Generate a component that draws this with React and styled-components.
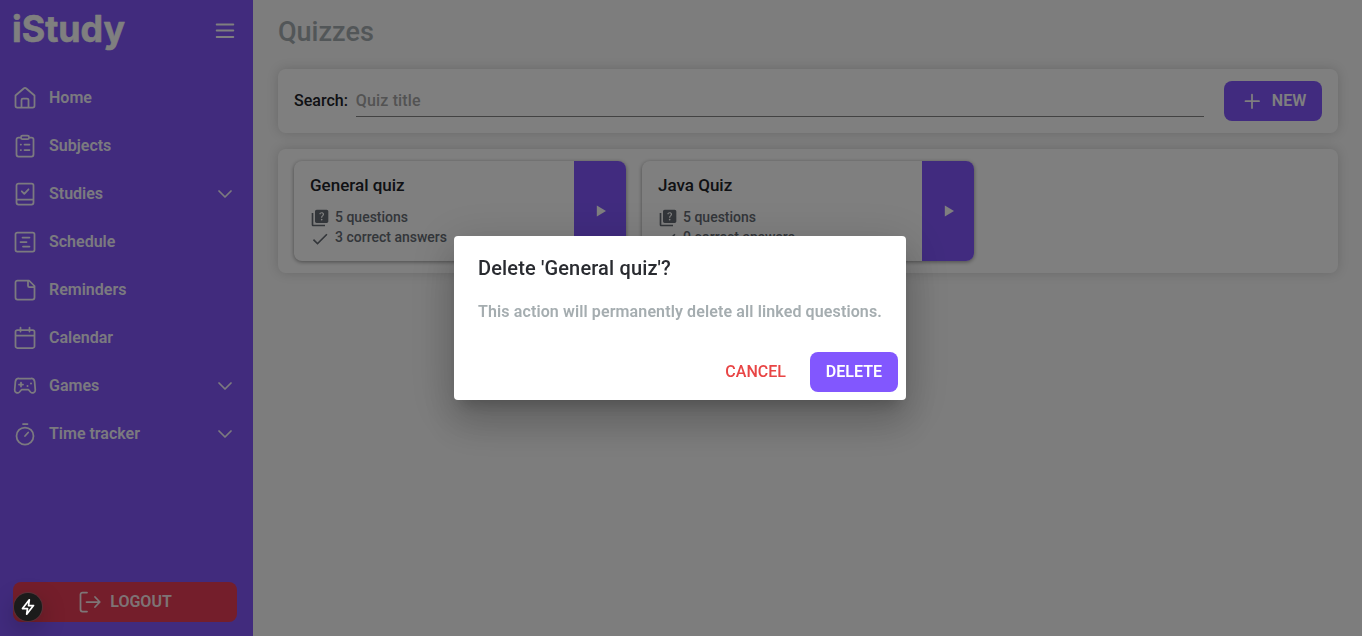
import React from "react";
import styled, { createGlobalStyle, css } from "styled-components";

const GlobalStyle = createGlobalStyle`
  *, *::before, *::after { box-sizing: border-box; }
  body {
    margin: 0;
    background: #fafafa;
    color: #212328;
    font-family: Roboto, "Liberation Sans", sans-serif;
    font-size: 16px;
    font-weight: 500;
    overflow: hidden;
  }
  button, input { font: inherit; }
`;

const Shell = styled.div`
  display: flex;
  height: 100vh;
`;

const Sidebar = styled.aside`
  display: flex;
  flex-direction: column;
  width: 253px;
  flex: none;
  padding: 0 16px 14px 13px;
  background: #8257fb;
  color: #fff;
`;

const Brand = styled.header`
  display: flex;
  align-items: center;
  justify-content: space-between;
  height: 62px;
  margin-bottom: 12px;
`;

const Logo = styled.svg`
  display: block;
  width: 120px;
  height: 62px;
  overflow: visible;
  fill: #fff;
  stroke: #fff;
  stroke-width: 0.6;
  stroke-linejoin: round;
  font-family: Inter, sans-serif;
  font-size: 37px;
  font-weight: 700;
`;

const IconButton = styled.button`
  display: flex;
  padding: 0;
  border: 0;
  background: none;
  color: inherit;
`;

const Svg = styled.svg`
  display: block;
  flex: none;
  fill: none;
  stroke: currentColor;
  stroke-width: 1.75;
  stroke-linecap: round;
  stroke-linejoin: round;
`;

const Nav = styled.nav`
  display: flex;
  flex-direction: column;
  flex: 1;
`;

const NavItem = styled.a`
  display: flex;
  align-items: center;
  gap: 12px;
  height: 48px;
  color: rgba(255, 255, 255, 0.94);
  font-weight: 600;
`;

const NavLabel = styled.span`
  flex: 1;
  padding-bottom: 2px;
`;

const Button = styled.button`
  display: flex;
  align-items: center;
  justify-content: center;
  height: 40px;
  padding: 0 16px;
  border: 0;
  border-radius: 8px;
  color: #fff;
  font-weight: 600;
  ${({ $tone }) =>
    ({
      primary: css`background: #8257fe;`,
      danger: css`background: #e83d57; gap: 8px; color: rgba(255, 255, 255, 0.9);`,
      text: css`background: none; color: #e84545; font-weight: 500;`,
    })[$tone]}
`;

const ButtonLabel = styled.span`
  padding-bottom: 2px;
`;

const Main = styled.main`
  flex: 1;
  display: flex;
  flex-direction: column;
  gap: 16px;
  padding: 11px 24px 0 25px;
`;

const PageTitle = styled.h1`
  margin: 0;
  height: 42px;
  line-height: 42px;
  font-size: 27px;
  font-weight: 500;
  color: #a5adb0;
`;

const Panel = styled.section`
  display: flex;
  align-items: ${({ $align }) => $align || "flex-start"};
  padding: 12px 16px;
  border-radius: 8px;
  background: #fff;
  box-shadow: 0 0 12px rgba(0, 0, 0, 0.16);
`;

const SearchLabel = styled.label`
  margin-right: 8px;
  padding-bottom: 2px;
`;

const SearchInput = styled.input`
  flex: 1;
  height: 32px;
  margin-right: 20px;
  padding: 0;
  border: 0;
  border-bottom: 1px solid #858585;
  outline: 0;
  background: none;
  letter-spacing: 0.15px;
  &::placeholder { color: #a6a6a6; opacity: 1; }
`;

const NewButton = styled(Button)`
  width: 98px;
  gap: 8px;
  padding: 0 16px;
`;

const Cards = styled.div`
  display: flex;
  gap: 16px;
`;

const Card = styled.article`
  display: flex;
  width: 332px;
  height: 100px;
  border-radius: 8px;
  overflow: hidden;
  background: #fff;
  box-shadow: 0 1px 4px rgba(0, 0, 0, 0.42);
`;

const CardBody = styled.div`
  flex: 1;
  padding: 12px 16px;
`;

const CardTitle = styled.h2`
  margin: 0 0 10px;
  font-size: 17px;
  line-height: 24px;
  font-weight: 500;
`;

const Stat = styled.div`
  display: flex;
  align-items: center;
  gap: 5px;
  height: 20px;
  font-size: 14px;
  color: #666c74;
`;

const StatIcon = styled.svg`
  flex: none;
  margin-top: ${({ $drop }) => $drop}px;
  fill: currentColor;
`;

const PlayButton = styled.button`
  display: flex;
  align-items: center;
  justify-content: center;
  width: 52px;
  padding: 0 0 0 1px;
  border: 0;
  background: #8257fe;
  color: #fff;
`;

const Overlay = styled.div`
  position: fixed;
  inset: 0;
  display: flex;
  align-items: center;
  justify-content: center;
  padding-right: 2px;
  background: rgba(0, 0, 0, 0.5);
`;

const Dialog = styled.div`
  width: 452px;
  border-radius: 4px;
  background: #fff;
  box-shadow: 0 11px 15px -7px rgba(0, 0, 0, 0.2), 0 24px 38px 3px rgba(0, 0, 0, 0.14), 0 9px 46px 8px rgba(0, 0, 0, 0.12);
`;

const DialogTitle = styled.h2`
  margin: 0;
  padding: 16px 24px;
  font-size: 20px;
  line-height: 32px;
  font-weight: 500;
  letter-spacing: 0.15px;
  color: #292b30;
`;

const DialogText = styled.p`
  margin: 0;
  padding: 0 24px 20px;
  line-height: 24px;
  font-weight: 600;
  letter-spacing: 0.12px;
  white-space: nowrap;
  color: #a5adb0;
`;

const DialogActions = styled.div`
  display: flex;
  justify-content: flex-end;
  gap: 8px;
  padding: 8px;
`;

const DevBadge = styled.div`
  position: fixed;
  left: 14px;
  bottom: 15px;
  display: flex;
  align-items: center;
  justify-content: center;
  width: 28px;
  height: 28px;
  border-radius: 50%;
  background: #1b1b1b;
  color: #fff;
  box-shadow: 0 0 0 1px rgba(70, 70, 70, 0.5), 0 8px 24px rgba(0, 0, 0, 0.25);
`;

const icons = {
  home: <path d="M2.5 9.500 10.700 2.500a2 2 0 0 1 2.600 0L21.500 9.500V19.800a1.800 1.800 0 0 1-1.800 1.800H4.300a1.800 1.800 0 0 1-1.800-1.800ZM8.500 21.500V14a1.500 1.500 0 0 1 1.500-1.500h4a1.500 1.500 0 0 1 1.500 1.500v7.500" />,
  subjects: <path d="M8 3.500H5.500a2 2 0 0 0-2 2v15a2 2 0 0 0 2 2h13a2 2 0 0 0 2-2v-15a2 2 0 0 0-2-2H16M9.500 1.500h5A1.500 1.500 0 0 1 16 3v.7a1.500 1.500 0 0 1-1.500 1.500h-5A1.500 1.500 0 0 1 8 3.700V3a1.500 1.500 0 0 1 1.500-1.500ZM7.700 10.500h.3M11.500 10.500h5M7.700 16h.3M11.500 16h5" />,
  studies: <path d="M5.500 1.500h13a2 2 0 0 1 2 2v17a2 2 0 0 1-2 2h-13a2 2 0 0 1-2-2v-17a2 2 0 0 1 2-2ZM3.500 17.500h17M8.800 9.300l2.500 2.500 4.200-4.500" />,
  schedule: <path d="M4.300 2.500h15.400a1.800 1.800 0 0 1 1.800 1.800v15.400a1.800 1.800 0 0 1-1.800 1.800H4.300a1.800 1.800 0 0 1-1.800-1.800V4.300a1.800 1.800 0 0 1 1.800-1.800ZM9.500 7.500h7M7.500 12h6M10 16.500h6.500" />,
  reminders: <path d="M4.500 2.500H16l5.500 5.500v11.500a2 2 0 0 1-2 2h-15a2 2 0 0 1-2-2v-15a2 2 0 0 1 2-2ZM15 2.500v5.200a1.300 1.300 0 0 0 1.300 1.300h5.200" />,
  calendar: <path d="M4.300 4h15.400a1.800 1.800 0 0 1 1.800 1.800v14.400a1.800 1.800 0 0 1-1.800 1.800H4.300a1.800 1.800 0 0 1-1.800-1.800V5.800A1.800 1.800 0 0 1 4.300 4ZM2.500 9.500h19M7.500 1.500v4M16.500 1.500v4" />,
  games: (
    <>
      <path d="M6 4.500h12a3.600 3.600 0 0 1 3.600 3.200l.7 8.100a2.800 2.800 0 0 1-4.800 2.200l-2-2.300H8.500l-2 2.300a2.800 2.800 0 0 1-4.800-2.200l.7-8.100A3.600 3.600 0 0 1 6 4.500ZM6 10.500h4M8 8.500v4" />
      <path d="M14.500 12h.01M18 9.500h.01" strokeWidth="2" />
    </>
  ),
  timer: <path d="M12 5.500a8.500 8.500 0 1 0 0 17 8.500 8.500 0 0 0 0-17ZM10 2h4.500M12 14l3.200-3.500" />,
  logout: <path d="M9 2.500H4.500a2 2 0 0 0-2 2v15a2 2 0 0 0 2 2H9M8.500 12h13M17 7l4.800 5-4.800 5" />,
  chevron: <path d="m6 9 6 6 6-6" />,
  menu: <path d="M3.700 5.500h16.600M3.700 11.500h16.600M3.700 18h16.600" strokeWidth="1.900" />,
};

const Icon = ({ name, size = 24 }) => (
  <Svg width={size} height={size} viewBox="0 0 24 24" aria-hidden="true">
    {icons[name]}
  </Svg>
);

const navItems = [
  { icon: "home", label: "Home" },
  { icon: "subjects", label: "Subjects" },
  { icon: "studies", label: "Studies", expandable: true },
  { icon: "schedule", label: "Schedule" },
  { icon: "reminders", label: "Reminders" },
  { icon: "calendar", label: "Calendar" },
  { icon: "games", label: "Games", expandable: true },
  { icon: "timer", label: "Time tracker", expandable: true },
];

const quizzes = [
  { title: "General quiz", questions: 5, correct: 3 },
  { title: "Java Quiz", questions: 5, correct: 0 },
];

const QuizCard = ({ quiz }) => (
  <Card>
    <CardBody>
      <CardTitle>{quiz.title}</CardTitle>
      <Stat>
        <StatIcon $drop={1} width="20" height="20" viewBox="0 0 24 24">
          <path d="M4 6H2v14c0 1.100.9 2 2 2h14v-2H4V6zm16-4H8c-1.100 0-2 .9-2 2v12c0 1.100.9 2 2 2h12c1.100 0 2-.9 2-2V4c0-1.100-.9-2-2-2zm-5.990 13c-.59 0-1.050-.47-1.050-1.050 0-.59.470-1.040 1.050-1.040.590 0 1.040.450 1.040 1.040-.01.580-.450 1.050-1.040 1.050zm2.500-6.170c-.630.930-1.230 1.210-1.560 1.810-.130.240-.180.400-.180 1.180h-1.520c0-.410-.060-1.080.260-1.650.410-.730 1.180-1.160 1.630-1.800.480-.680.210-1.940-1.140-1.940-.880 0-1.320.670-1.500 1.230l-1.370-.570C11.510 5.960 12.520 5 13.990 5c1.230 0 2.080.560 2.510 1.260.370.610.580 1.730.010 2.570z" />
        </StatIcon>
        {quiz.questions} questions
      </Stat>
      <Stat>
        <StatIcon $drop={3} width="20" height="20" viewBox="0 0 24 24">
          <path d="M9 16.170 4.830 12l-1.420 1.410L9 19 21 7l-1.410-1.410z" />
        </StatIcon>
        {quiz.correct} correct answers
      </Stat>
    </CardBody>
    <PlayButton aria-label="Play">
      <svg width="20" height="20" viewBox="0 0 24 24" fill="currentColor">
        <path d="M7 5.500v13L18 12z" />
      </svg>
    </PlayButton>
  </Card>
);

export default function App() {
  return (
    <>
      <GlobalStyle />
      <Shell>
        <Sidebar>
          <Brand>
            <Logo viewBox="0 0 120 62">
              <text x="-1" y="41.500" textLength="113" lengthAdjust="spacingAndGlyphs">iStudy</text>
            </Logo>
            <IconButton aria-label="Menu">
              <Icon name="menu" />
            </IconButton>
          </Brand>
          <Nav>
            {navItems.map((item) => (
              <NavItem key={item.label}>
                <Icon name={item.icon} />
                <NavLabel>{item.label}</NavLabel>
                {item.expandable && <Icon name="chevron" />}
              </NavItem>
            ))}
          </Nav>
          <Button $tone="danger">
            <Icon name="logout" />
            <ButtonLabel>LOGOUT</ButtonLabel>
          </Button>
        </Sidebar>
        <Main>
          <PageTitle>Quizzes</PageTitle>
          <Panel $align="center">
            <SearchLabel htmlFor="search">Search:</SearchLabel>
            <SearchInput id="search" placeholder="Quiz title" />
            <NewButton $tone="primary">
              <Svg width="24" height="24" viewBox="0 0 24 24">
                <path d="M12 5.500v13.500M5.500 12.200h13.500" />
              </Svg>
              <ButtonLabel>NEW</ButtonLabel>
            </NewButton>
          </Panel>
          <Panel>
            <Cards>
              {quizzes.map((quiz) => (
                <QuizCard key={quiz.title} quiz={quiz} />
              ))}
            </Cards>
          </Panel>
        </Main>
      </Shell>
      <Overlay>
        <Dialog role="dialog">
          <DialogTitle>Delete 'General quiz'?</DialogTitle>
          <DialogText>This action will permanently delete all linked questions.</DialogText>
          <DialogActions>
            <Button $tone="text">
              <ButtonLabel>CANCEL</ButtonLabel>
            </Button>
            <Button $tone="primary">
              <ButtonLabel>DELETE</ButtonLabel>
            </Button>
          </DialogActions>
        </Dialog>
      </Overlay>
      <DevBadge>
        <Svg width="20" height="20" viewBox="0 0 20 20">
          <path d="M11.300 2.800 4.500 11.500h5L8.700 17.200l6.800-8.700h-5Z" />
        </Svg>
      </DevBadge>
    </>
  );
}
